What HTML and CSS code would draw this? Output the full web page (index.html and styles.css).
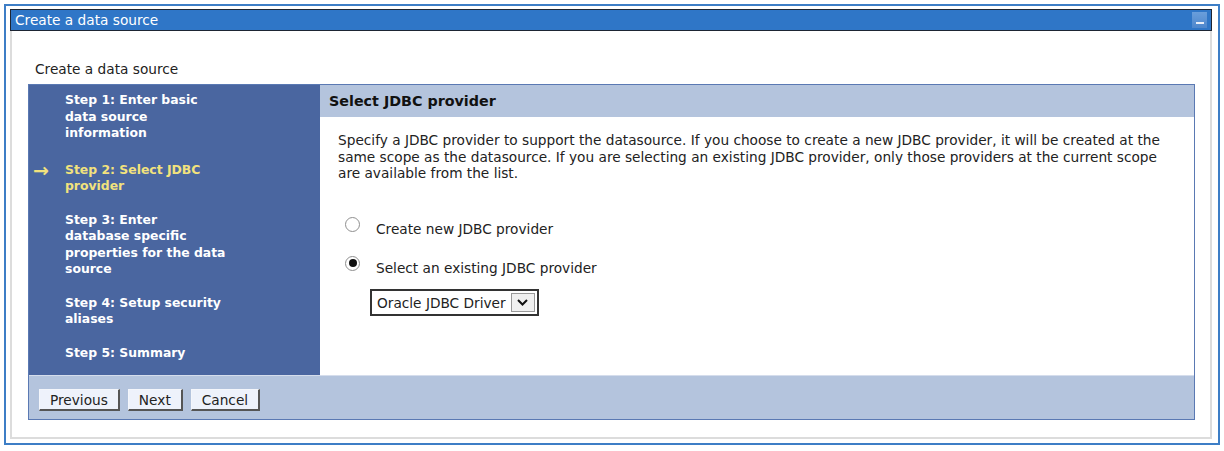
FILE: index.html
```html
<!DOCTYPE html>
<html lang="en">
<head>
    <meta charset="UTF-8">
    <title>Create a data source</title>
    <link rel="stylesheet" href="styles.css">
</head>
<body>
    <div class="frame">
        <div class="portlet">
            <div class="titlebar">
                <span>Create a data source</span>
                <span class="min-btn"><span class="dash"></span></span>
            </div>

            <div class="portlet-body">
                <div class="page-title">Create a data source</div>

                <div class="wizard">
                    <div class="wizard-main">
                        <ul class="steps">
                            <li><span class="marker"></span><span class="step-text">Step 1: Enter basic data source information</span></li>
                            <li class="current"><span class="marker">&#8594;</span><span class="step-text">Step 2: Select JDBC provider</span></li>
                            <li><span class="marker"></span><span class="step-text">Step 3: Enter<br>database specific properties for the data source</span></li>
                            <li><span class="marker"></span><span class="step-text">Step 4: Setup security aliases</span></li>
                            <li><span class="marker"></span><span class="step-text">Step 5: Summary</span></li>
                        </ul>

                        <div class="panel">
                            <div class="panel-head">Select JDBC provider</div>
                            <div class="panel-body">
                                <p class="intro">Specify a JDBC provider to support the datasource. If you choose to create a new JDBC provider, it will be created at the same scope as the datasource. If you are selecting an existing JDBC provider, only those providers at the current scope are available from the list.</p>

                                <div class="option">
                                    <span class="radio"></span>
                                    <span>Create new JDBC provider</span>
                                </div>
                                <div class="option">
                                    <span class="radio checked"></span>
                                    <span>Select an existing JDBC provider</span>
                                </div>

                                <div class="dropdown">
                                    <span class="dropdown-value">Oracle JDBC Driver</span>
                                    <span class="dropdown-btn">
                                        <svg width="13" height="9" viewBox="0 0 13 9"><path d="M2 2 L6.5 6.5 L11 2" fill="none" stroke="#111" stroke-width="2"/></svg>
                                    </span>
                                </div>
                            </div>
                        </div>
                    </div>

                    <div class="wizard-foot">
                        <button>Previous</button>
                        <button>Next</button>
                        <button>Cancel</button>
                    </div>
                </div>
            </div>
        </div>
    </div>
</body>
</html>
```

FILE: styles.css
```css
body {
    margin: 0;
    font-family: "DejaVu Sans", Verdana, sans-serif;
    font-size: 13.7px;
    color: #222;
    background: #fff;
}
.frame {
    margin: 4px;
    width: 1216px;
    height: 441px;
    border: 2px solid #3d7ec6;
    padding: 3px 6px 4px 4px;
    box-sizing: border-box;
}
.portlet {
    border: 2px solid #dcdcdc;
    border-top: none;
    height: 100%;
    box-sizing: border-box;
    display: flex;
    flex-direction: column;
}
.titlebar {
    display: flex;
    align-items: center;
    height: 24px;
    box-sizing: border-box;
    margin: 0 -2px;
    padding-left: 4px;
    background: #2f76c7;
    border: 1px solid #1d2533;
    color: #fff;
    font-size: 13.7px;
}
.min-btn {
    margin-left: auto;
    margin-right: 4px;
    width: 15px;
    height: 16px;
    background: linear-gradient(#6a9edb, #4d86cc);
    display: flex;
    justify-content: center;
    align-items: flex-end;
}
.min-btn .dash {
    width: 8px;
    height: 2px;
    background: #e8eef8;
    margin-bottom: 4px;
}
.portlet-body {
    flex: 1;
    padding: 30px 15px 17px 16px;
}
.page-title {
    line-height: 16px;
    margin-bottom: 7px;
    padding-left: 7px;
}
.wizard {
    border: 1px solid #5a79b3;
    height: 336px;
    box-sizing: border-box;
    display: flex;
    flex-direction: column;
}
.wizard-main {
    flex: 1;
    min-height: 0;
    display: flex;
}
.steps {
    list-style: none;
    margin: 0;
    width: 291px;
    padding: 7px 0 0 4px;
    box-sizing: border-box;
    background: #4a66a0;
    color: #fff;
    font-weight: bold;
    font-size: 12.4px;
    line-height: 16.5px;
}
.steps li {
    display: flex;
    margin-bottom: 17px;
}
.steps li:last-child {
    margin-bottom: 0;
}
.steps li.current {
    color: #f2e27d;
    margin-top: 20px;
}
.marker {
    width: 32px;
    flex-shrink: 0;
    font-size: 19px;
    line-height: 16.5px;
}
.step-text {
    width: 162px;
}
.panel {
    flex: 1;
    display: flex;
    flex-direction: column;
}
.panel-head {
    height: 32px;
    line-height: 33px;
    padding-left: 9px;
    background: #b4c4dd;
    font-weight: bold;
    font-size: 14.3px;
    color: #111;
}
.panel-body {
    padding: 15px 20px 0 18px;
    line-height: 16.5px;
}
.intro {
    margin: 0 0 35px;
}
.option {
    display: flex;
    align-items: flex-start;
    gap: 16px;
    padding-left: 7px;
    height: 18px;
    margin-bottom: 21px;
}
.option span:last-child {
    margin-top: 4px;
}
.radio {
    width: 15px;
    height: 15px;
    border: 1px solid #8f8f8f;
    border-radius: 50%;
    box-sizing: border-box;
    display: flex;
    align-items: center;
    justify-content: center;
}
.radio.checked::after {
    content: "";
    width: 8px;
    height: 8px;
    border-radius: 50%;
    background: #111;
}
.dropdown {
    margin: -9px 0 0 32px;
    display: inline-flex;
    align-items: center;
    height: 27px;
    box-sizing: border-box;
    border: 2px solid #333;
    padding: 0 2px 0 5px;
    gap: 5px;
}
.dropdown-btn {
    width: 24px;
    height: 19px;
    box-sizing: border-box;
    border: 1px solid #999;
    background: #f0f0f0;
    display: flex;
    align-items: center;
    justify-content: center;
}
.wizard-foot {
    height: 44px;
    flex-shrink: 0;
    box-sizing: border-box;
    background: #b4c4dd;
    border-top: 1px solid #d5ddec;
    padding: 13px 10px 0;
    display: flex;
    align-items: flex-start;
    gap: 8px;
}
button {
    font-family: inherit;
    font-size: 13.7px;
    color: #222;
    height: 22px;
    padding: 0 10px;
    background: #eef2fb;
    border-style: solid;
    border-width: 1px 2px 2px 1px;
    border-color: #f4f6fb #555 #555 #f4f6fb;
}
```
